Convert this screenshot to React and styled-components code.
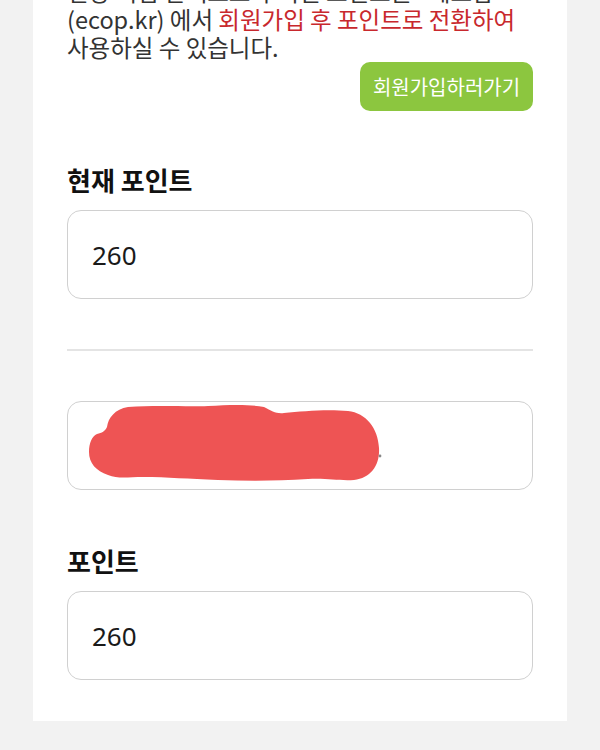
import React from "react";
import styled, { createGlobalStyle } from "styled-components";

const Global = createGlobalStyle`
  html, body { margin: 0; padding: 0; background: #f2f2f2; }
  body { font-family: "Noto Sans", "Noto Sans CJK KR", sans-serif; overflow: hidden; }
`;

const Card = styled.div`
  margin: -23px 33px 0;
  background: #ffffff;
  padding: 0 34px 41px;
  display: flex;
  flex-direction: column;
`;

const Intro = styled.p`
  margin: 0;
  font-size: 23.5px;
  line-height: 28px;
  color: #333333;
  font-family: "Noto Sans CJK KR", "Noto Sans", sans-serif;
  white-space: nowrap;
`;

const Red = styled.span`
  color: #c8282d;
`;

const ButtonRow = styled.div`
  display: flex;
  justify-content: flex-end;
  margin-top: 1px;
`;

const GreenButton = styled.button`
  height: 49px;
  width: 173px;
  border: none;
  border-radius: 10px;
  background: #8cc63f;
  color: #ffffff;
  font-family: "Noto Sans CJK KR", sans-serif;
  font-size: 20px;
  padding: 0;
  cursor: pointer;
`;

const Label = styled.h3`
  margin: ${(p) => p.$top}px 0 15px;
  font-family: "Noto Sans CJK KR", sans-serif;
  font-size: 26px;
  line-height: 30px;
  font-weight: 700;
  color: #111111;
`;

const Field = styled.div`
  box-sizing: border-box;
  height: 89px;
  border: 1.5px solid #d0d0d0;
  border-radius: 14px;
  display: flex;
  align-items: center;
  padding: 0 ${(p) => (p.$pad != null ? p.$pad : 24)}px;
  font-size: 26px;
  color: #1a1a1a;
  font-family: "Noto Sans", "Noto Sans CJK KR", sans-serif;
`;

const Divider = styled.hr`
  margin: 50px 0;
  border: none;
  height: 2px;
  background: #e4e4e4;
`;

const Scribble = () => (
  <svg width="300" height="86" viewBox="0 0 300 86">
    <path
      d="M1 49 C1 40 4 33 9 31 C14 30 17 28 19 24 C20 15 27 6 40 4 C70 2 100 4 120 3 C140 2 160 1 176 4 C184 8 188 11 196 10 C215 8 240 6 260 8 C278 10 290 25 291 45 C292 62 283 75 266 77 C250 78 240 75 220 76 C190 78 160 78 130 77 C100 76 80 74 55 74 C40 74 30 76 20 72 C8 68 1 60 1 49 Z"
      fill="#ee5454"
    />
    <circle cx="292" cy="53" r="1.4" fill="#888888" />
  </svg>
);

export default function App() {
  return (
    <>
      <Global />
      <Card>
        <Intro>
          현장 적립 잔액으로 누적된 포인트는 "에코팝"
          <br />
          (ecop.kr) 에서 <Red>회원가입 후 포인트로 전환하여</Red>
          <br />
          사용하실 수 있습니다.
        </Intro>
        <ButtonRow>
          <GreenButton>회원가입하러가기</GreenButton>
        </ButtonRow>
        <Label $top={54}>현재 포인트</Label>
        <Field>260</Field>
        <Divider />
        <Field $pad={20}>
          <Scribble />
        </Field>
        <Label $top={56}>포인트</Label>
        <Field>260</Field>
      </Card>
    </>
  );
}
